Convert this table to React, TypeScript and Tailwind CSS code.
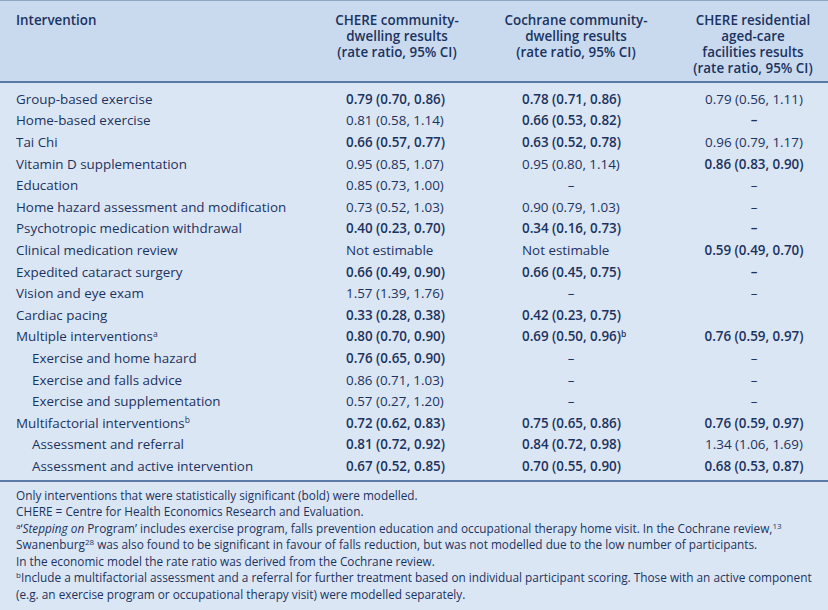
import React from 'react';

type Cell = { v: string; b?: boolean; sup?: string };
type Row = { name: string; indent?: boolean; sup?: string; c1: Cell; c2: Cell; c3: Cell };

const rows: Row[] = [
  { name: 'Group-based exercise', c1: { v: '0.79 (0.70, 0.86)', b: true }, c2: { v: '0.78 (0.71, 0.86)', b: true }, c3: { v: '0.79 (0.56, 1.11)' } },
  { name: 'Home-based exercise', c1: { v: '0.81 (0.58, 1.14)' }, c2: { v: '0.66 (0.53, 0.82)', b: true }, c3: { v: '–', b: true } },
  { name: 'Tai Chi', c1: { v: '0.66 (0.57, 0.77)', b: true }, c2: { v: '0.63 (0.52, 0.78)', b: true }, c3: { v: '0.96 (0.79, 1.17)' } },
  { name: 'Vitamin D supplementation', c1: { v: '0.95 (0.85, 1.07)' }, c2: { v: '0.95 (0.80, 1.14)' }, c3: { v: '0.86 (0.83, 0.90)', b: true } },
  { name: 'Education', c1: { v: '0.85 (0.73, 1.00)' }, c2: { v: '–' }, c3: { v: '–' } },
  { name: 'Home hazard assessment and modification', c1: { v: '0.73 (0.52, 1.03)' }, c2: { v: '0.90 (0.79, 1.03)' }, c3: { v: '–' } },
  { name: 'Psychotropic medication withdrawal', c1: { v: '0.40 (0.23, 0.70)', b: true }, c2: { v: '0.34 (0.16, 0.73)', b: true }, c3: { v: '–', b: true } },
  { name: 'Clinical medication review', c1: { v: 'Not estimable' }, c2: { v: 'Not estimable' }, c3: { v: '0.59 (0.49, 0.70)', b: true } },
  { name: 'Expedited cataract surgery', c1: { v: '0.66 (0.49, 0.90)', b: true }, c2: { v: '0.66 (0.45, 0.75)', b: true }, c3: { v: '–', b: true } },
  { name: 'Vision and eye exam', c1: { v: '1.57 (1.39, 1.76)' }, c2: { v: '–' }, c3: { v: '–' } },
  { name: 'Cardiac pacing', c1: { v: '0.33 (0.28, 0.38)', b: true }, c2: { v: '0.42 (0.23, 0.75)', b: true }, c3: { v: '' } },
  { name: 'Multiple interventions', sup: 'a', c1: { v: '0.80 (0.70, 0.90)', b: true }, c2: { v: '0.69 (0.50, 0.96)', b: true, sup: 'b' }, c3: { v: '0.76 (0.59, 0.97)', b: true } },
  { name: 'Exercise and home hazard', indent: true, c1: { v: '0.76 (0.65, 0.90)', b: true }, c2: { v: '–' }, c3: { v: '–' } },
  { name: 'Exercise and falls advice', indent: true, c1: { v: '0.86 (0.71, 1.03)' }, c2: { v: '–' }, c3: { v: '–' } },
  { name: 'Exercise and supplementation', indent: true, c1: { v: '0.57 (0.27, 1.20)' }, c2: { v: '–' }, c3: { v: '–' } },
  { name: 'Multifactorial interventions', sup: 'b', c1: { v: '0.72 (0.62, 0.83)', b: true }, c2: { v: '0.75 (0.65, 0.86)', b: true }, c3: { v: '0.76 (0.59, 0.97)', b: true } },
  { name: 'Assessment and referral', indent: true, c1: { v: '0.81 (0.72, 0.92)', b: true }, c2: { v: '0.84 (0.72, 0.98)', b: true }, c3: { v: '1.34 (1.06, 1.69)' } },
  { name: 'Assessment and active intervention', indent: true, c1: { v: '0.67 (0.52, 0.85)', b: true }, c2: { v: '0.70 (0.55, 0.90)', b: true }, c3: { v: '0.68 (0.53, 0.87)', b: true } },
];

function Val({ c }: { c: Cell }) {
  return (
    <span className={c.b ? 'font-semibold' : 'font-normal'}>
      {c.v}
      {c.sup && <sup className="text-[8.5px] font-semibold">{c.sup}</sup>}
    </span>
  );
}

export default function App() {
  return (
    <div
      className="w-[828px] h-[610px] overflow-hidden bg-[#dbe6f4] text-[#1b335f]"
      style={{ fontFamily: '"Open Sans", "Noto Sans", sans-serif' }}
    >
      {/* header */}
      <div className="grid grid-cols-[306px_190px_190px_1fr] items-start bg-[#c9daef] border-t border-[#8fa5c4] border-b-2 border-b-[#5b7aa5] pt-[11px] pb-[5px] text-[13.4px] leading-[16px] font-semibold">
        <div className="pl-4">Intervention</div>
        <div className="text-center pr-[8px]">
          CHERE community-
          <br />
          dwelling results
          <br />
          (rate ratio, 95% CI)
        </div>
        <div className="text-center pr-[30px]">
          Cochrane community-
          <br />
          dwelling results
          <br />
          (rate ratio, 95% CI)
        </div>
        <div className="text-center pr-[8px]">
          CHERE residential
          <br />
          aged-care
          <br />
          facilities results
          <br />
          (rate ratio, 95% CI)
        </div>
      </div>

      {/* body */}
      <div className="pt-[5px] pb-[3px] border-b-2 border-[#5b7aa5] text-[13.4px]">
        {rows.map((r) => (
          <div key={r.name} className="grid grid-cols-[306px_190px_190px_1fr] h-[21.6px] items-center leading-[16px]">
            <div className={r.indent ? 'pl-8' : 'pl-4'}>
              {r.name}
              {r.sup && <sup className="text-[8.5px]">{r.sup}</sup>}
            </div>
            <div className="pl-[40px] whitespace-nowrap">
              <Val c={r.c1} />
            </div>
            <div className="pl-[26px]">
              <div className={r.c2.v === '–' ? 'w-[98px] text-center' : 'whitespace-nowrap'}>
                <Val c={r.c2} />
              </div>
            </div>
            <div className="text-center pr-[6px]">
              <Val c={r.c3} />
            </div>
          </div>
        ))}
      </div>

      {/* footnotes */}
      <div className="pl-4 pr-2 pt-[5px] text-[11.8px] leading-[16.5px]">
        <p>Only interventions that were statistically significant (bold) were modelled.</p>
        <p>CHERE = Centre for Health Economics Research and Evaluation.</p>
        <p>
          <sup className="text-[8px]">a</sup>‘<i>Stepping on</i> Program’ includes exercise program, falls prevention education and occupational therapy home visit. In the Cochrane review,
          <sup className="text-[8px]">13</sup> Swanenburg<sup className="text-[8px]">28</sup> was also found to be significant in favour of falls reduction, but was not modelled due to the low number of participants.
        </p>
        <p>In the economic model the rate ratio was derived from the Cochrane review.</p>
        <p>
          <sup className="text-[8px]">b</sup>Include a multifactorial assessment and a referral for further treatment based on individual participant scoring. Those with an active component (e.g. an exercise program or occupational therapy visit) were modelled separately.
        </p>
      </div>
    </div>
  );
}
